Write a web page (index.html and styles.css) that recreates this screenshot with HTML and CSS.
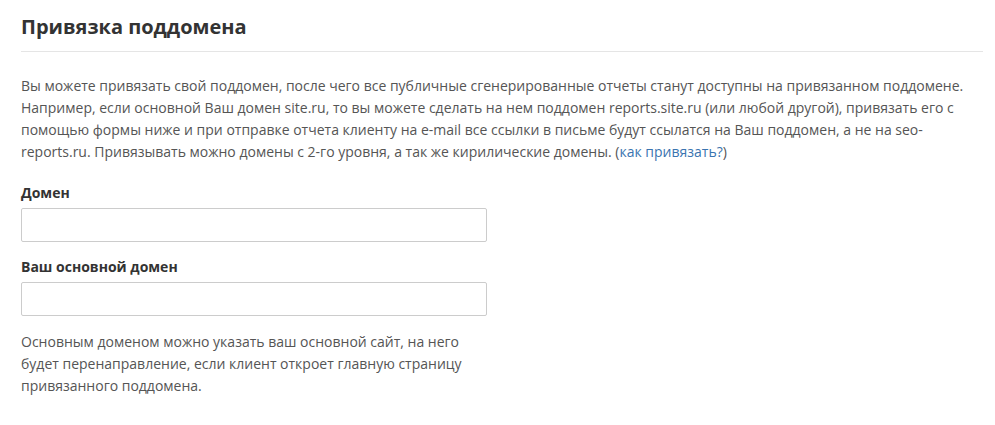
FILE: index.html
```html
<!DOCTYPE html>
<html lang="ru">
<head>
<meta charset="utf-8">
<title>Привязка поддомена</title>
<link rel="stylesheet" href="styles.css">
</head>
<body>
<div class="page">
  <h2 class="title">Привязка поддомена</h2>
  <p class="intro">Вы можете привязать свой поддомен, после чего все публичные сгенерированные отчеты станут доступны на привязанном поддомене. Например, если основной Ваш домен site.ru, то вы можете сделать на нем поддомен reports.site.ru (или любой другой), привязать его с помощью формы ниже и при отправке отчета клиенту на e-mail все ссылки в письме будут ссылатся на Ваш поддомен, а не на seo-reports.ru. Привязывать можно домены с 2-го уровня, а так же кирилические домены. (<a href="#" class="link">как привязать?</a>)</p>
  <form class="form">
    <div class="field">
      <label class="label" for="domain">Домен</label>
      <input class="input" id="domain" type="text">
    </div>
    <div class="field">
      <label class="label" for="main">Ваш основной домен</label>
      <input class="input" id="main" type="text">
    </div>
    <p class="help">Основным доменом можно указать ваш основной сайт, на него будет перенаправление, если клиент откроет главную страницу привязанного поддомена.</p>
  </form>
</div>
</body>
</html>
```
FILE: styles.css
```css
html, body {
  margin: 0;
  padding: 0;
  background: #fff;
}

body {
  font-family: "Open Sans", "Liberation Sans", sans-serif;
  font-size: 14px;
  line-height: 22px;
  color: #555;
}

.page {
  width: 962px;
  padding: 14px 0 0 21px;
}

.title {
  margin: 0;
  padding-bottom: 11px;
  border-bottom: 1px solid #e5e5e5;
  font-size: 20px;
  line-height: 26px;
  font-weight: 700;
  color: #333;
}

.intro {
  margin: 23px 0 0;
}

.link {
  color: #3a74b0;
  text-decoration: none;
}

.form {
  width: 466px;
  margin-top: 19px;
}

.field {
  display: flex;
  flex-direction: column;
  margin-bottom: 14px;
}

.label {
  font-weight: 700;
  color: #333;
  margin-bottom: 4px;
}

.input {
  box-sizing: border-box;
  height: 34px;
  width: 100%;
  margin: 0;
  border: 1px solid #ccc;
  border-radius: 2px;
  background: #fff;
  font: inherit;
  padding: 6px 12px;
}

.help {
  margin: 0;
  padding-top: 1px;
}
```
